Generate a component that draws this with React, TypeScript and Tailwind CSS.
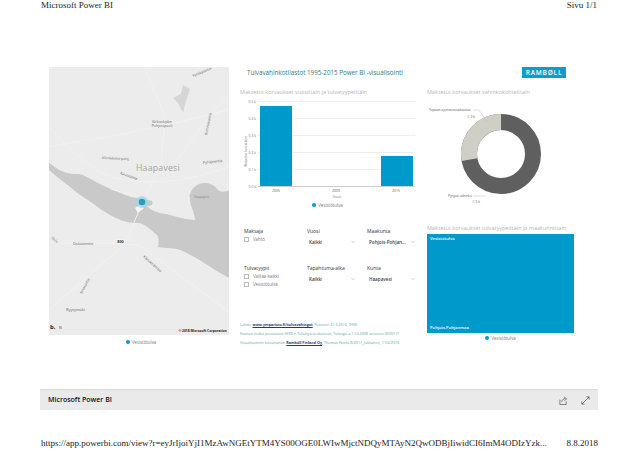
import React from "react";
import { ChevronDown } from "lucide-react";

const blue = "#0099cc";

const Legend = ({ className = "" }: { className?: string }) => (
  <div className={"flex items-center justify-center gap-[2px] text-[4.4px] leading-[6px] text-[#777] " + className}>
    <span className="w-[4px] h-[4px] rounded-full bg-[#0099cc]" />
    Vesistötulva
  </div>
);

const MapView = () => (
  <svg viewBox="0 0 180 268" width={180} height={268} className="block bg-[#ececec] font-['Open_Sans']">
    {/* water */}
    <path d="M0 96 C6 100 12 105 19 106 C26 108 30 106 34 108 C44 113 54 119 64 123 C74 127 80 130 88 131 C96 132 104 134 112 137 C122 140 132 139 140 136 C139 128 143 120 150 117 C156 115 164 116 168 122 C172 126 176 125 180 123 L180 211 C165 203 148 190 131 183 C122 180 115 182 109 180 C110 174 110 171 108 168 C102 163 97 158 91 156 L84 156 C76 155 68 152 61 148 C52 143 46 138 39 133 C30 128 24 122 16 116 C10 112 5 107 0 103 Z" fill="#c9c9c9" />
    {/* land between the pin and the lake */}
    <path d="M100 130 C112 128 130 128 141 130 C140 138 146 145 146 153 C140 153 128 150 117 147 C108 146 101 143 98 139 C104 139 106 136 100 130 Z" fill="#ececec" />
    <path d="M86 141 L92 137 L95 141 L89 146 Z" fill="#f6f6f6" />
    {/* roads */}
    <g stroke="#f1f1f1" strokeWidth="1" fill="none">
      <path d="M0 60 C40 105 60 110 72 112 C110 120 150 110 180 100" />
      <path d="M0 243 L76 177 L94 134 L112 96 L116 50 L96 0" />
      <path d="M0 176 L66 176 L90 178 L130 208 L180 245" />
      <path d="M126 96 C145 70 165 40 180 30" />
      <path d="M0 80 C50 70 100 65 180 42" />
      <path d="M62 122 L84 128" />
    </g>
    <path d="M124 31 L132 27 L134 18 L141 22 L137 34 L134 46 L129 36 Z" fill="#d6d6d6" />
    {/* labels */}
    <g fill="#666" fontSize="3.6">
      <text transform="translate(144 10) rotate(-22)">Kytökyläntie</text>
      <text x="113" y="56" textAnchor="middle">Kirkonkylän</text>
      <text x="113" y="60" textAnchor="middle">Pohjoispuoli</text>
      <text transform="translate(158 68) rotate(-78)">Kumisevantie</text>
      <text transform="translate(154 97) rotate(-6)">Pyhäjoentie</text>
      <text transform="translate(53 92) rotate(3)">Kliinikkotie pohj.</text>
      <text transform="translate(71 107) rotate(20)">Kauniontie</text>
      <text x="145" y="131" fontSize="3" fill="#888">Haapajärvi</text>
      <text x="24" y="178">Oulaistentie</text>
      <text transform="translate(2 171) rotate(42)">Oulu</text>
      <text transform="translate(94 190) rotate(42)">Kärsämäentie</text>
      <text transform="translate(33 227) rotate(-62)">Nivalantie</text>
      <text x="17" y="244" fontSize="4">Ryytymäki</text>
    </g>
    <text x="109" y="104" fontSize="8.6" fill="#a3a3a3" letterSpacing=".3" textAnchor="middle">Haapavesi</text>
    <rect x="67" y="172" width="9" height="5" fill="#f3f3f3" />
    <text x="71.5" y="176" fontSize="3.8" fontWeight="700" fill="#333" textAnchor="middle">800</text>
    {/* pin */}
    <circle cx="93" cy="135" r="6" fill="#9fd8ec" opacity=".8" />
    <circle cx="93" cy="135" r="3.3" fill="#2f9cb8" />
    <text x="1" y="262" fontSize="6" fontWeight="700" fill="#222">b.</text>
    <text x="10" y="262" fontSize="3.6" fill="#444">N</text>
    <text x="178" y="265" fontSize="3.3" fontWeight="700" fill="#222" textAnchor="end">© 2018 Microsoft Corporation</text>
  </svg>
);

const Chart = () => (
  <svg viewBox="0 0 175 110" width={175} height={110} className="block font-['Open_Sans']">
    <g stroke="#eeeeee" strokeWidth="1">
      {[3, 20, 37, 54, 71].map((y) => (
        <line key={y} x1="18" x2="175" y1={y + 0.5} y2={y + 0.5} />
      ))}
    </g>
    <line x1="18" x2="175" y1="88.5" y2="88.5" stroke="#cccccc" />
    <g fill="#777" fontSize="3.4" textAnchor="end">
      {["0.5 k", "0.4 k", "0.3 k", "0.2 k", "0.1 k", "0.0 k"].map((t, i) => (
        <text key={t} x="16" y={4.5 + i * 17}>{t}</text>
      ))}
    </g>
    <text transform="translate(6.5 53) rotate(-90)" fontSize="3.2" fill="#777" textAnchor="middle">Maksetut korvaukset</text>
    <rect x="20" y="8" width="32" height="80" fill={blue} />
    <rect x="141" y="58" width="32" height="30" fill={blue} />
    <g fill="#555" fontSize="3.4" textAnchor="middle">
      <text x="36" y="94">2005</text>
      <text x="96" y="94">2009</text>
      <text x="156" y="94">2015</text>
    </g>
    <text x="97" y="100" fontSize="3.4" fill="#777" textAnchor="middle">Vuosi</text>
  </svg>
);

const Donut = () => (
  <svg viewBox="0 0 147 106" width={147} height={106} className="block font-['Open_Sans']">
    <circle cx="74" cy="56" r="32" fill="none" stroke="#5f5f5f" strokeWidth="16" />
    {/* light slice runs from just under 9 o'clock round to 12 */}
    <circle
      cx="74"
      cy="56"
      r="32"
      fill="none"
      stroke="#cfcfc6"
      strokeWidth="16"
      strokeDasharray="55.8 145.3"
      transform="rotate(170 74 56)"
    />
    <g fill="#555" fontSize="3.4">
      <text x="2" y="13">Yapaan ajoneuvovakuutus</text>
      <text x="48" y="20" textAnchor="end">€ 2 k</text>
      <text x="21" y="99">Pysyvä vahinko</text>
      <text x="53" y="105" textAnchor="end">€ 5 k</text>
    </g>
    <path d="M46 12 H52 L60 24" stroke="#bbb" strokeWidth=".5" fill="none" />
    <path d="M46 98 H58" stroke="#bbb" strokeWidth=".5" fill="none" />
  </svg>
);

const Dropdown = ({ title, value }: { title: string; value: string }) => (
  <div className="w-[60px] text-[#444]">
    <div className="text-[5px] leading-[7px] text-[#333]">{title}</div>
    <div className="mt-[3px] w-[49px] flex items-center justify-between pl-[2px] text-[4.6px] leading-[8px] font-semibold">
      <span className="truncate">{value}</span>
      <ChevronDown size={6} strokeWidth={1.5} className="text-[#888] shrink-0" />
    </div>
  </div>
);

const Check = ({ label }: { label: string }) => (
  <div className="flex items-center gap-[4px] h-[8px] text-[4.4px] text-[#777]">
    <span className="w-[5px] h-[5px] border-[0.5px] border-[#bbb] bg-white" />
    {label}
  </div>
);

export default function App() {
  return (
    <div className="w-[639px] h-[451px] bg-white overflow-hidden flex flex-col font-['Open_Sans']">
      <div className="flex justify-between pl-[41px] pr-[42px] h-[67px] font-['Liberation_Serif'] text-[9px] leading-[11px] text-[#222]">
        <span>Microsoft Power BI</span>
        <span>Sivu 1/1</span>
      </div>

      <div className="flex pl-[49px] h-[283px]">
        <div className="w-[180px]">
          <MapView />
          <Legend className="mt-[4px] pl-[4px]" />
        </div>

        <div className="w-[187px] ml-[11px]">
          <div className="pl-[7px] pt-[1px] h-[22px] text-[6.25px] leading-[9px] text-[#2b7c86]">
            Tulvavahinkotilastot 1995-2015 Power BI -visualisointi
          </div>
          <div className="h-[9px] text-[5.5px] leading-[7px] text-[#b5b5b5] whitespace-nowrap">
            Maksetut korvaukset vuosittain ja tulvatyypeittäin
          </div>
          <Chart />
          <Legend className="w-[175px] -mt-[6px]" />

          <div className="mt-[20px] pl-[4px] flex">
            <div className="w-[63px]">
              <div className="text-[5px] leading-[7px] text-[#333]">Maksaja</div>
              <Check label="Vahto" />
            </div>
            <Dropdown title="Vuosi" value="Kaikki" />
            <Dropdown title="Maakunta" value="Pohjois-Pohjan..." />
          </div>
          <div className="mt-[19px] pl-[4px] flex">
            <div className="w-[63px]">
              <div className="text-[5px] leading-[7px] text-[#333]">Tulvatyypit</div>
              <Check label="Vaillaa kaikki" />
              <Check label="Vesistötulva" />
            </div>
            <Dropdown title="Tapahtuma-aika" value="Kaikki" />
            <Dropdown title="Kunta" value="Haapavesi" />
          </div>

          <div className="mt-[34px] flex flex-col gap-[4px] text-[3.7px] leading-[5px] text-[#5fa5a0] whitespace-nowrap">
            <div>
              Lähde: <span className="underline font-bold text-[#1f3a7a]">www.ymparisto.fi/tulvavahingot</span>, Rekisteri 31.3.2016, SYKE
            </div>
            <div>Kuviten tiedot perustuvat SYKE:n Tulvatyö-tiedostoon, Tulvagis-a 1.10.2008 versioon (8/2017)</div>
            <div>
              Visualisoinnin toteuttanut: <span className="underline font-bold text-[#1f3a7a]">Ramböll Finland Oy</span>, Thomas Hovilä 8/2017, Jukkanen, 11/4/2016
            </div>
          </div>
        </div>

        <div className="w-[147px]">
          <div className="h-[22px] flex justify-end pr-[8px]">
            <div className="w-[44px] h-[11px] bg-[#0d9ccb] flex items-center justify-center text-white text-[6.5px] font-semibold tracking-[0.8px]">
              RAMBØLL
            </div>
          </div>
          <div className="h-[9px] text-[5.5px] leading-[7px] text-[#b5b5b5] whitespace-nowrap">
            Maksetut korvaukset vahinkokohteittain
          </div>
          <Donut />
          <div className="mt-[21px] h-[9px] text-[5.5px] leading-[7px] text-[#b5b5b5] whitespace-nowrap">
            Maksetut korvaukset tulvatyypeittäin ja maakunnittain
          </div>
          <div className="h-[99px] bg-[#0099cc] flex flex-col justify-between px-[3px] py-[2px] text-[4.2px] leading-[6px] text-white font-semibold">
            <span>Vesistötulva</span>
            <span>Pohjois-Pohjanmaa</span>
          </div>
          <Legend className="mt-[2px]" />
        </div>
      </div>

      <div className="mt-[39px] ml-[40px] w-[558px] h-[21px] bg-[#eaeaea] border-t border-[#d8d8d8] flex items-center justify-between pl-[8px] pr-[8px] text-[7px] font-semibold text-[#111]">
        <span>Microsoft Power BI</span>
        <div className="flex items-center gap-[13px] text-[#555]">
          <svg width="9" height="9" viewBox="0 0 10 10" fill="none" stroke="currentColor" strokeWidth=".8">
            <path d="M1 4 V9.5 H8 V6 M3 6.5 C3.5 4 5 3 7 3 M5.5 1 L8.5 3 L6 5.5" />
          </svg>
          <svg width="9" height="9" viewBox="0 0 10 10" fill="none" stroke="currentColor" strokeWidth=".8">
            <path d="M1 9 L9 1 M6 1 H9 V4 M1 6 V9 H4" />
          </svg>
        </div>
      </div>

      <div className="mt-[28px] flex justify-between pl-[41px] pr-[41px] font-['Liberation_Serif'] text-[9px] leading-[10px] text-[#222] whitespace-nowrap">
        <span>https://app.powerbi.com/view?r=eyJrIjoiYjI1MzAwNGEtYTM4YS00OGE0LWIwMjctNDQyMTAyN2QwODBjIiwidCI6ImM4ODIzYzk...</span>
        <span>8.8.2018</span>
      </div>
    </div>
  );
}
